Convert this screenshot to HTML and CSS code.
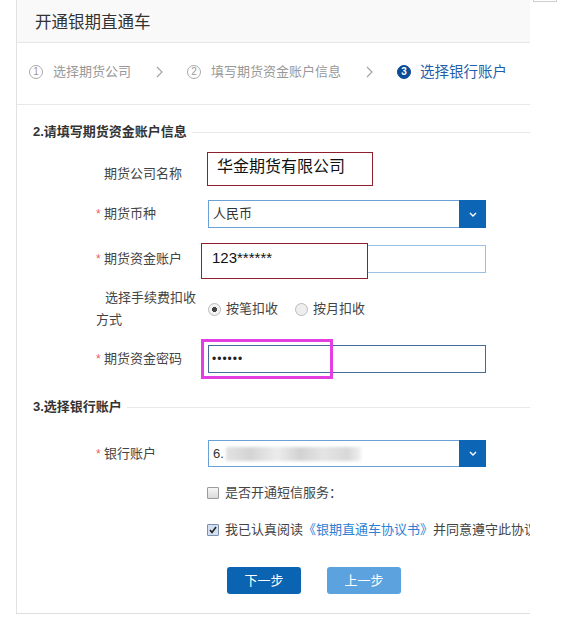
FILE: index.html
```html
<!DOCTYPE html>
<html lang="zh-CN">
  <head>
    <meta charset="UTF-8" />
    <meta name="viewport" content="width=device-width, initial-scale=1.0" />
    <title>开通银期直通车</title>
    <link rel="stylesheet" href="styles.css">
  </head>
  <body>
    <div class="page">
      <div class="panel">
        <div class="panel-head">
          <h2 class="panel-title">开通银期直通车</h2>
        </div>

        <div class="steps">
          <div class="step">
            <span class="step-num">1</span>
            <span class="step-text">选择期货公司</span>
          </div>
          <svg class="step-arrow" viewBox="0 0 7 12">
            <polyline points="1,1 6,6 1,11" fill="none" stroke="#a0a0a0" stroke-width="1.1" />
          </svg>
          <div class="step">
            <span class="step-num">2</span>
            <span class="step-text">填写期货资金账户信息</span>
          </div>
          <svg class="step-arrow" viewBox="0 0 7 12">
            <polyline points="1,1 6,6 1,11" fill="none" stroke="#a0a0a0" stroke-width="1.1" />
          </svg>
          <div class="step is-active">
            <span class="step-num">3</span>
            <span class="step-text">选择银行账户</span>
          </div>
        </div>

        <form class="form" action="#">
          <div class="sect sect-first">2.请填写期货资金账户信息</div>

          <div class="row row-company">
            <label class="row-label">期货公司名称</label>
            <div class="company-box">华金期货有限公司</div>
          </div>

          <div class="row row-currency">
            <label class="row-label"><span class="req">*</span>期货币种</label>
            <div class="select">
              <span class="select-value">人民币</span>
              <span class="select-btn">
                <svg viewBox="0 0 8 5" width="8" height="5">
                  <polyline points="1,1 4,4 7,1" fill="none" stroke="#fff" stroke-width="1.4" />
                </svg>
              </span>
            </div>
          </div>

          <div class="row row-account">
            <label class="row-label"><span class="req">*</span>期货资金账户</label>
            <div class="input input-light">
              <div class="mark mark-red">123******</div>
            </div>
          </div>

          <div class="row row-fee">
            <label class="row-label fee-label">选择手续费扣收方式</label>
            <div class="radio-group">
              <span class="radio is-checked"></span>
              <span class="radio-text">按笔扣收</span>
              <span class="radio"></span>
              <span class="radio-text">按月扣收</span>
            </div>
          </div>

          <div class="row row-password">
            <label class="row-label"><span class="req">*</span>期货资金密码</label>
            <div class="input input-dark">
              <span class="dots">••••••</span>
              <div class="mark mark-pink"></div>
            </div>
          </div>

          <div class="sect sect-second">3.选择银行账户</div>

          <div class="row row-bank">
            <label class="row-label"><span class="req">*</span>银行账户</label>
            <div class="select select-bank">
              <span class="select-value">6.<span class="blurred"></span></span>
              <span class="select-btn">
                <svg viewBox="0 0 8 5" width="8" height="5">
                  <polyline points="1,1 4,4 7,1" fill="none" stroke="#fff" stroke-width="1.4" />
                </svg>
              </span>
            </div>
          </div>

          <div class="check-row row-sms">
            <span class="check"></span>
            <span>是否开通短信服务：</span>
          </div>

          <div class="check-row row-agree">
            <span class="check is-checked">
              <svg viewBox="0 0 10 10" width="10" height="10">
                <polyline points="2,5 4,7.5 8,2" fill="none" stroke="#222" stroke-width="1.6" />
              </svg>
            </span>
            <span>我已认真阅读<a class="link" href="#">《银期直通车协议书》</a>并同意遵守此协议</span>
          </div>

          <div class="actions">
            <button type="button" class="btn btn-primary">下一步</button>
            <button type="button" class="btn btn-light">上一步</button>
          </div>
        </form>
      </div>
      <span class="corner"></span>
    </div>
  </body>
</html>
```

FILE: styles.css
```css
body {
  margin: 0;
  background: #fff;
  font-family: "Liberation Sans", "Noto Sans CJK SC", sans-serif;
  color: #333;
}

.page {
  position: relative;
}

.panel {
  margin-left: 16px;
  width: 514px;
  box-sizing: border-box;
  border-left: 1px solid #e2e2e2;
  border-bottom: 1px solid #dedede;
  overflow: hidden;
}

.panel-head {
  height: 43px;
  box-sizing: border-box;
  padding: 2px 0 0 18px;
  background: #f9f9f9;
  border-bottom: 1px solid #e6e6e6;
}

.panel-title {
  margin: 0;
  font-size: 16.5px;
  font-weight: normal;
  line-height: 40px;
  color: #333;
}

/* steps bar */
.steps {
  display: flex;
  align-items: center;
  height: 62px;
  box-sizing: border-box;
  padding: 0 0 4px 12px;
  border-bottom: 1px solid #e8e8e8;
}

.step {
  display: flex;
  align-items: center;
}

.step-num {
  width: 12px;
  height: 12px;
  border: 1px solid #aaa;
  border-radius: 50%;
  font-size: 10px;
  line-height: 12px;
  text-align: center;
  color: #999;
}

.step-text {
  margin-left: 10px;
  font-size: 13px;
  line-height: 18px;
  color: #999;
}

.step-arrow {
  width: 7px;
  height: 12px;
  margin: 0 24px 0 25px;
}

.step.is-active .step-num {
  background: #0b4c97;
  border-color: #0b4c97;
  color: #fff;
  font-weight: bold;
}

.step.is-active .step-text {
  margin-left: 9px;
  font-size: 14.5px;
  color: #1f5fa9;
}

/* form */
.form {
  padding-bottom: 19px;
}

.sect {
  display: flex;
  align-items: center;
  gap: 5px;
  padding-left: 16px;
  height: 18px;
  font-size: 13px;
  font-weight: bold;
  line-height: 18px;
  color: #333;

  &::after {
    content: "";
    flex: 1;
    height: 1px;
    background: #e8e8e8;
  }
}

.sect-first {
  margin-top: 18px;
}

.sect-second {
  margin-top: 25px;
}

.row {
  display: flex;
  align-items: center;
  padding-left: 79px;
}

.row-label {
  width: 112px;
  flex-shrink: 0;
  box-sizing: border-box;
  padding-left: 8px;
  font-size: 13px;
  line-height: 20px;
  color: #444;
}

.req {
  display: inline-block;
  width: 8px;
  margin-left: -8px;
  color: #e86060;
  font-size: 12px;
}

.row-company {
  margin-top: 11px;
  align-items: flex-start;

  .row-label {
    margin-top: 12px;
  }
}

.company-box {
  margin-left: -1px;
  width: 166px;
  height: 34px;
  box-sizing: border-box;
  border: 1px solid #8e1f2f;
  padding: 2px 0 0 9px;
  font-size: 16px;
  line-height: 24px;
  color: #111;
}

.row-currency {
  margin-top: 14px;
}

.select {
  display: flex;
  width: 278px;
  height: 28px;
  box-sizing: border-box;
  border: 1px solid #6aa2d8;
}

.select-value {
  flex: 1;
  display: flex;
  align-items: center;
  padding-left: 4px;
  font-size: 13px;
  line-height: 26px;
  color: #333;
}

.select-btn {
  width: 27px;
  margin: -1px -1px -1px 0;
  display: flex;
  align-items: center;
  justify-content: center;
  background: #0d66b5;
}

.blurred {
  width: 135px;
  height: 14px;
  margin-left: 2px;
  background: linear-gradient(90deg, #e2e2e2, #d4d4d4 18%, #ececec 38%, #d2d2d2 55%, #e4e4e4 72%, #d8d8d8 90%, #f0f0f0);
  filter: blur(1.5px);
}

.row-account {
  margin-top: 17px;
}

.input {
  position: relative;
  width: 278px;
  height: 28px;
  box-sizing: border-box;
  border: 1px solid #9cc0e2;
}

.input-dark {
  border-color: #436d95;
}

.mark {
  position: absolute;
  box-sizing: border-box;
}

.mark-red {
  left: -8px;
  top: -3px;
  width: 167px;
  height: 36px;
  border: 1px solid #8e1f2f;
  background: #fff;
  padding: 1px 0 0 10px;
  font-size: 15px;
  line-height: 26px;
  color: #111;
}

.mark-pink {
  left: -8px;
  top: -7px;
  width: 132px;
  height: 40px;
  border: 3px solid #e33fe0;
}

.row-fee {
  margin-top: 14px;
}

.fee-label {
  width: 104px;
  margin-right: 8px;
  padding-left: 0;
  text-indent: 9px;
  line-height: 22px;
}

.radio-group {
  display: flex;
  align-items: center;
  font-size: 13px;
  line-height: 20px;
  color: #444;
}

.radio {
  width: 11px;
  height: 11px;
  border: 1px solid #bbb;
  border-radius: 50%;
  background: #eee;

  &.is-checked {
    background: radial-gradient(circle, #444 0 2.3px, #f2f2f2 2.8px);
  }

  & + .radio-text {
    margin-left: 5px;
  }

  &:nth-child(3) {
    margin-left: 17px;
  }
}

.row-password {
  margin-top: 14px;
}

.dots {
  display: block;
  padding-left: 3px;
  font-size: 12px;
  letter-spacing: 1px;
  line-height: 26px;
  color: #222;
}

.row-bank {
  margin-top: 24px;

  .select {
    height: 27px;
  }
}

.check-row {
  display: flex;
  align-items: center;
  gap: 6px;
  padding-left: 190px;
  height: 20px;
  font-size: 13px;
  line-height: 20px;
  color: #444;
  white-space: nowrap;
}

.row-sms {
  margin-top: 16px;
}

.row-agree {
  margin-top: 17px;
}

.check {
  display: flex;
  align-items: center;
  justify-content: center;
  width: 12px;
  height: 12px;
  flex-shrink: 0;
  box-sizing: border-box;
  border: 1px solid #9a9a9a;
  border-radius: 1px;
  background: linear-gradient(#f6f6f6, #dadada);

  &.is-checked {
    border-color: #7b8fae;
    background: #d3e0f2;
  }
}

.link {
  color: #2b7fd4;
  text-decoration: none;
}

.actions {
  display: flex;
  gap: 26px;
  margin-top: 27px;
  padding-left: 210px;
}

.btn {
  width: 74px;
  height: 27px;
  padding: 0;
  border: 0;
  border-radius: 3px;
  font-family: inherit;
  font-size: 13px;
  line-height: 27px;
  color: #fff;
  cursor: pointer;
}

.btn-primary {
  background: #0b64b2;
}

.btn-light {
  background: #5ba2de;
}

.corner {
  position: absolute;
  top: -19px;
  left: 533px;
  width: 22px;
  height: 19px;
  border: 1px solid #cfcfcf;
}
```
